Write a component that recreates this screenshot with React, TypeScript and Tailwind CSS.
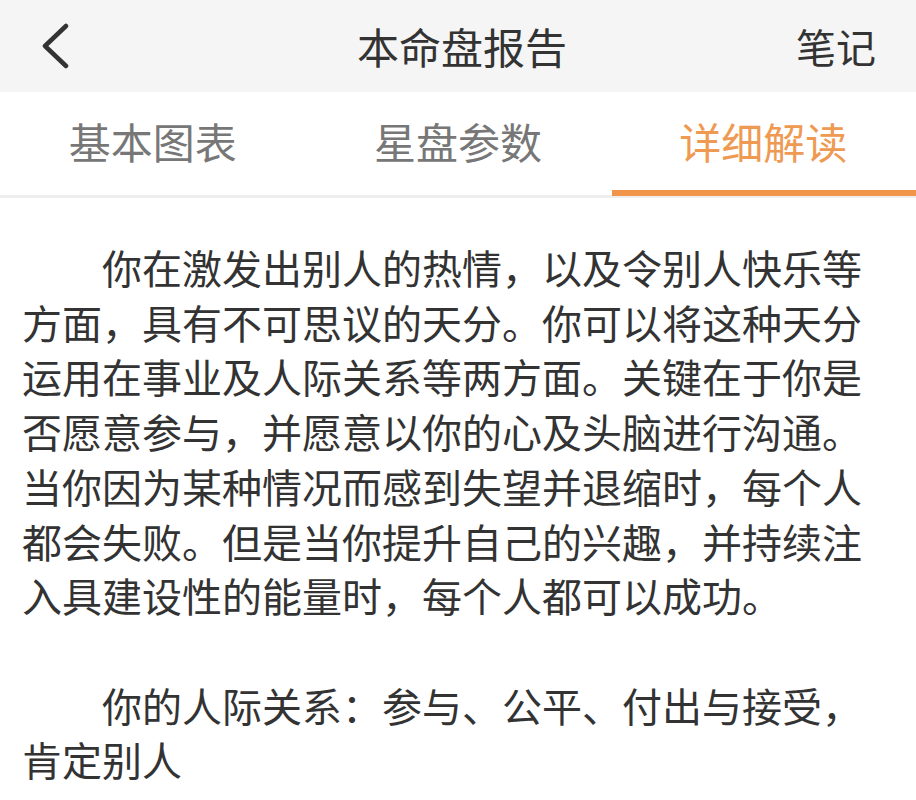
const tabs = ['基本图表', '星盘参数', '详细解读'];

const paragraphs = [
  '你在激发出别人的热情，以及令别人快乐等方面，具有不可思议的天分。你可以将这种天分运用在事业及人际关系等两方面。关键在于你是否愿意参与，并愿意以你的心及头脑进行沟通。当你因为某种情况而感到失望并退缩时，每个人都会失败。但是当你提升自己的兴趣，并持续注入具建设性的能量时，每个人都可以成功。',
  '你的人际关系：参与、公平、付出与接受，肯定别人'
];

export default function App() {
  const active = 2;

  return (
    <div
      className="min-h-screen w-[916px] bg-white text-[#333]"
      style={{ fontFamily: '"Noto Sans CJK SC", "Noto Sans", sans-serif' }}
    >
      <header className="grid h-[92px] grid-cols-[1fr_auto_1fr] items-center bg-[#f5f5f5] px-[40px]">
        <button className="flex h-[50px] w-[40px] items-center">
          <svg width="30" height="46" viewBox="0 0 30 46" fill="none">
            <path d="M26 3 L5 23 L26 43" stroke="#333" strokeWidth="4.5" strokeLinecap="round" strokeLinejoin="round" />
          </svg>
        </button>
        <h1 className="ml-[8px] text-[42px] leading-none">本命盘报告</h1>
        <span className="justify-self-end text-[40px] leading-none">笔记</span>
      </header>

      <nav className="grid h-[106px] grid-cols-3 border-b-[3px] border-[#eeeeee]">
        {tabs.map((tab, i) => (
          <div key={tab} className="relative flex items-center justify-center pb-[6px]">
            <span className={`text-[42px] leading-none ${i === active ? 'text-[#ef9a52]' : 'text-[#777]'}`}>
              {tab}
            </span>
            {i === active ? (
              <div className="absolute bottom-[-1px] left-[1px] right-0 h-[6px] bg-[#f0954a]" />
            ) : null}
          </div>
        ))}
      </nav>

      <main className="px-[22px] pt-[42px]">
        {paragraphs.map((p, i) => (
          <p key={i} className={`indent-[80px] text-[40px] leading-[54.7px] text-[#333] ${i > 0 ? 'mt-[54.7px]' : ''}`}>
            {p}
          </p>
        ))}
      </main>
    </div>
  );
}
